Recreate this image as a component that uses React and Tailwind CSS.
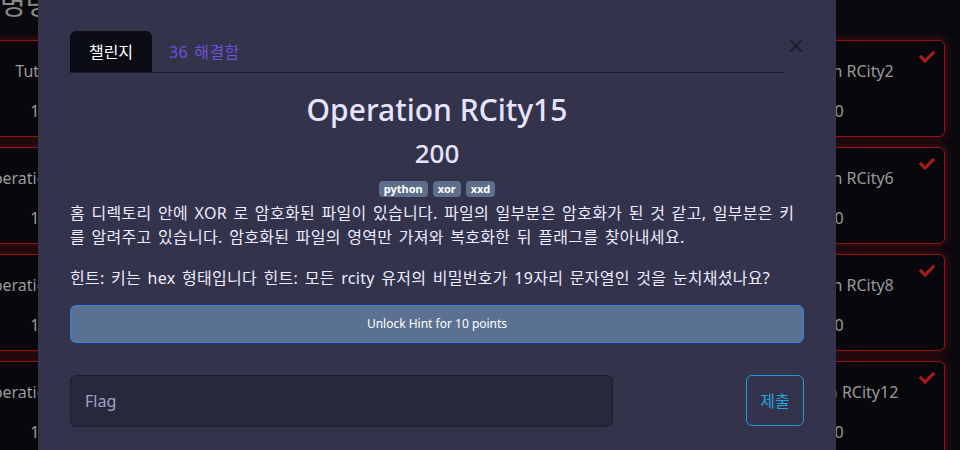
import React from "react";
import { FaCheck } from "react-icons/fa";

const font = { fontFamily: '"Noto Sans", "Noto Sans CJK KR", sans-serif' };

function Card({ title, points, solved }) {
  return (
    <div className="relative h-[97px] rounded-md border border-[#8e1616] bg-[#08070c] shadow-[0_0_8px_1px_rgba(140,20,20,0.5)] flex flex-col items-center pt-[18px]">
      {solved && (
        <FaCheck className="absolute right-[9px] top-[8px] text-[#a51c1c]" size={16} />
      )}
      <div className="text-[16px] leading-[24px] text-[#9a9a9a] whitespace-nowrap">{title}</div>
      <div className="mt-[16px] text-[16px] leading-[24px] text-[#9a9a9a]">{points}</div>
    </div>
  );
}

export default function App() {
  const rows = [
    ["Tutorial", "Operation RCity1", "Operation RCity1", "Operation RCity2"],
    ["Operation RCity3", "Operation RCity4", "Operation RCity5", "Operation RCity6"],
    ["Operation RCity7", "Operation RCity7", "Operation RCity7", "Operation RCity8"],
    ["Operation RCity9", "Operation RCity10", "Operation RCity11", "Operation RCity12"],
  ];
  return (
    <div className="relative w-[960px] h-[450px] overflow-hidden bg-[#0a090e]" style={font}>
      {/* background page */}
      <div className="ml-[-71px]">
        <div className="mt-[-14px] pl-[71px] text-[28px] leading-[36px] text-[#8a8a8a]">명령어 챌린지</div>
        <div className="mt-[18px] grid grid-cols-[230px_230px_230px_230px] gap-x-[32px] gap-y-[10px]">
          {rows.map((r, i) =>
            r.map((t, j) => (
              <Card key={i + "-" + j} title={t} points={j === 0 ? "100" : "200"} solved={j === 3} />
            ))
          )}
        </div>
      </div>

      {/* modal */}
      <div className="absolute left-[38px] top-0 w-[798px] h-[450px] bg-[#33334b] px-[32px] pt-[31px]">
        <div className="flex items-start">
          <div className="flex-1 flex border-b border-[#1c1c2a]">
            <div className="h-[41px] w-[82px] rounded-t-md bg-[#0c0c14] flex items-center justify-center text-[16px] text-white">
              챌린지
            </div>
            <div className="h-[41px] px-[17px] flex items-center text-[16px] tracking-[0.3px] [word-spacing:2px] text-[#6a52d9]">36 해결함</div>
          </div>
          <div className="w-[17px] ml-[2px] mt-[9px] flex justify-center">
            <svg width="12" height="12" viewBox="0 0 12 12">
              <path d="M1 1 L11 11 M11 1 L1 11" stroke="#1e1e2c" strokeWidth="2" strokeLinecap="round" />
            </svg>
          </div>
        </div>

        <div className="mt-[17px] text-center text-[30px] leading-[40px] font-medium text-[#e6e4ff]">Operation RCity15</div>
        <div className="mt-[7px] text-center text-[26px] leading-[32px] font-medium text-[#e6e4ff]">200</div>
        <div className="mt-[12px] flex justify-center gap-[5px]">
          {["python", "xor", "xxd"].map((t) => (
            <span key={t} className="h-[16px] px-[5px] rounded-[4px] bg-[#5d6f8b] text-white text-[11px] leading-[16px] font-bold">
              {t}
            </span>
          ))}
        </div>

        <p className="mt-[4px] text-[16px] leading-[24px] tracking-[0.3px] [word-spacing:2px] text-[#ecebff]">
          홈 디렉토리 안에 XOR 로 암호화된 파일이 있습니다. 파일의 일부분은 암호화가 된 것 같고, 일부분은 키를 알려주고 있습니다. 암호화된 파일의 영역만 가져와 복호화한 뒤 플래그를 찾아내세요.
        </p>
        <p className="mt-[17px] text-[16px] leading-[24px] tracking-[0.3px] [word-spacing:2px] text-[#ecebff]">
          힌트: 키는 hex 형태입니다 힌트: 모든 rcity 유저의 비밀번호가 19자리 문자열인 것을 눈치채셨나요?
        </p>

        <div className="mt-[15px] h-[38px] rounded-md border border-[#2f7ff0] bg-[#5b7191] flex items-center justify-center text-[12px] text-white">
          Unlock Hint for 10 points
        </div>

        <div className="mt-[32px] flex items-start">
          <div className="w-[543px] h-[52px] rounded-md border border-[#1d1d2b] bg-[#28283c] flex items-center pl-[14px] text-[16px] text-[#a3a3c4]">
            Flag
          </div>
          <div className="ml-auto w-[58px] h-[51px] rounded-md border border-[#1f9bd6] flex items-center justify-center text-[16px] text-[#27a3df]">
            제출
          </div>
        </div>
      </div>
    </div>
  );
}
